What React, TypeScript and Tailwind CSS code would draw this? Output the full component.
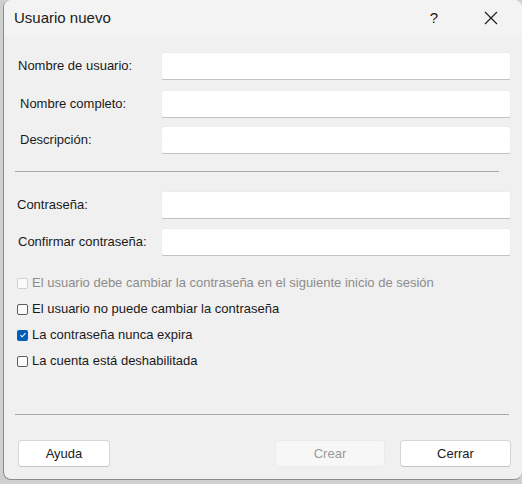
const font = { fontFamily: '"Liberation Sans", Arial, sans-serif' };

type Field = { label: string; labelX: string; top: string };

const userFields: Field[] = [
  { label: "Nombre de usuario:", labelX: "pl-[14px]", top: "mt-0" },
  { label: "Nombre completo:", labelX: "pl-[16px]", top: "mt-[10px]" },
  { label: "Descripción:", labelX: "pl-[16px]", top: "mt-[8px]" },
];

const passFields: Field[] = [
  { label: "Contraseña:", labelX: "pl-[13px]", top: "mt-0" },
  { label: "Confirmar contraseña:", labelX: "pl-[14px]", top: "mt-[9px]" },
];

const FieldRow = ({ label, labelX, top }: Field) => (
  <div className={`flex items-center h-[28px] ${top}`}>
    <label className={`w-[157px] text-[13px] text-[#1a1a1a] ${labelX}`}>
      {label}
    </label>
    <input className="w-[350px] h-[28px] bg-white border border-[#ececec] border-b-[#c2c2c2] rounded-[3px] outline-none px-2 text-[13px]" />
  </div>
);

const Check = ({
  label,
  checked = false,
  disabled = false,
}: {
  label: string;
  checked?: boolean;
  disabled?: boolean;
}) => (
  <div className="flex items-center h-[26px] pl-[13px] gap-[4px]">
    {checked ? (
      <span className="w-[11px] h-[11px] rounded-[2px] bg-[#005fb8] flex items-center justify-center">
        <svg width="8" height="8" viewBox="0 0 8 8">
          <path d="M1.5 4.2 L3.2 5.8 L6.5 2.2" stroke="white" strokeWidth="1.1" fill="none" />
        </svg>
      </span>
    ) : (
      <span
        className={`w-[11px] h-[11px] rounded-[2px] border bg-[#fbfbfb] ${
          disabled ? "border-[#d0d0d0]" : "border-[#5c5c5c]"
        }`}
      />
    )}
    <span className={`text-[13px] ${disabled ? "text-[#8c8c8c]" : "text-[#1a1a1a]"}`}>
      {label}
    </span>
  </div>
);

export default function App() {
  return (
    <div className="w-[522px] h-[484px] bg-[#cfcfcf] overflow-hidden" style={font}>
      <div className="ml-[3px] w-[519px] h-[480px] bg-[#f0f0f0] rounded-[8px] border-l border-b border-[#8a8a8a] flex flex-col overflow-hidden">
        {/* title bar */}
        <div className="h-[36px] flex items-center bg-[#f3f3f3]">
          <span className="pl-[10px] text-[15px] text-[#1a1a1a]">Usuario nuevo</span>
          <span className="ml-auto mr-[46px] text-[15px] text-[#1a1a1a]">?</span>
          <svg className="mr-[24px]" width="14" height="14" viewBox="0 0 14 14">
            <path d="M1 1 L13 13 M13 1 L1 13" stroke="#1a1a1a" strokeWidth="1.1" />
          </svg>
        </div>

        <div className="pt-[16px] flex flex-col">
          {userFields.map((f) => (
            <FieldRow key={f.label} {...f} />
          ))}

          <div className="mt-[17px] ml-[11px] w-[484px] h-px bg-[#a8a8a8]" />

          <div className="mt-[19px]">
            {passFields.map((f) => (
              <FieldRow key={f.label} {...f} />
            ))}
          </div>

          <div className="mt-[14px] flex flex-col">
            <Check
              label="El usuario debe cambiar la contraseña en el siguiente inicio de sesión"
              disabled
            />
            <Check label="El usuario no puede cambiar la contraseña" />
            <Check label="La contraseña nunca expira" checked />
            <Check label="La cuenta está deshabilitada" />
          </div>

          <div className="mt-[40px] ml-[11px] w-[494px] h-px bg-[#a8a8a8]" />

          <div className="mt-[25px] flex items-center pl-[14px]">
            <button className="w-[92px] h-[27px] bg-white border border-[#d6d6d6] border-b-[#c4c4c4] rounded-[4px] text-[13px] text-[#1a1a1a]">
              Ayuda
            </button>
            <button className="ml-auto w-[110px] h-[27px] bg-[#f7f7f7] border border-[#ebebeb] rounded-[4px] text-[13px] text-[#9a9a9a]">
              Crear
            </button>
            <button className="ml-[15px] mr-[11px] w-[111px] h-[27px] bg-white border border-[#d6d6d6] border-b-[#c4c4c4] rounded-[4px] text-[13px] text-[#1a1a1a]">
              Cerrar
            </button>
          </div>
        </div>
      </div>
    </div>
  );
}
